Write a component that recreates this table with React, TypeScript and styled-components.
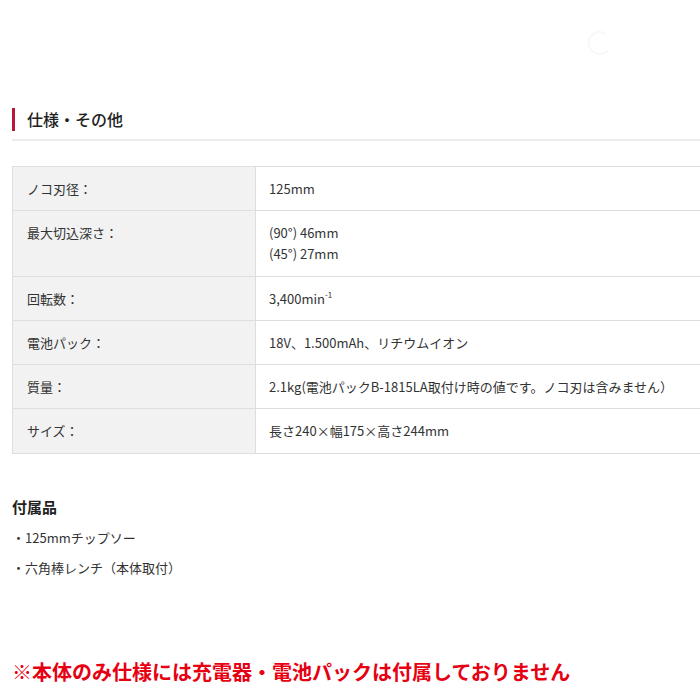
import React from "react";
import styled, { createGlobalStyle } from "styled-components";

const GlobalStyle = createGlobalStyle`
  html, body {
    margin: 0;
    padding: 0;
    background: #fff;
    overflow: hidden;
  }
  body {
    font-family: "Noto Sans CJK JP", "Noto Sans", sans-serif;
    color: #333;
  }
`;

const Page = styled.div`
  width: 700px;
  height: 700px;
  padding-left: 12px;
  box-sizing: border-box;
  overflow: hidden;
`;

const Top = styled.div`
  height: 103px;
  display: flex;
  justify-content: flex-end;
  align-items: flex-start;
  padding: 28px 86px 0 0;
  box-sizing: border-box;
`;

const Heading = styled.h2`
  margin: 0;
  display: flex;
  align-items: center;
  gap: 12px;
  font-size: 16px;
  font-weight: 500;
  line-height: 32px;
  color: #222;
  padding-bottom: 4px;
  border-bottom: 2px solid #ececec;
`;

const Bar = styled.span`
  width: 3px;
  height: 23px;
  background: #b5173d;
`;

const Table = styled.table`
  margin-top: 25px;
  width: 720px;
  border-collapse: collapse;
  font-size: 13px;
  border-top: 1px solid #dedede;
  border-left: 1px solid #dedede;
`;

const Row = styled.tr`
  border-bottom: 1px solid #dedede;
`;

const Label = styled.th`
  width: 243px;
  background: #f2f2f2;
  border-right: 1px solid #dedede;
  text-align: left;
  vertical-align: top;
  font-weight: 400;
  padding: 11px 14px 11.3px;
  line-height: 21px;
  box-sizing: border-box;
`;

const Value = styled.td`
  vertical-align: top;
  padding: 11px 13px 11.3px;
  line-height: 21px;
  background: #fff;
`;

const Sup = styled.sup`
  font-size: 8px;
  line-height: 0;
  vertical-align: 6px;
`;

const SubTitle = styled.h3`
  margin: 42px 0 0;
  font-size: 15px;
  font-weight: 700;
  line-height: 22px;
  color: #222;
`;

const List = styled.ul`
  list-style: none;
  margin: 5px 0 0;
  padding: 0;
  font-size: 13px;
`;

const Item = styled.li`
  line-height: 30px;
`;

const Note = styled.p`
  margin: 75px 0 0;
  font-size: 20px;
  font-weight: 700;
  line-height: 28px;
  color: #e60012;
  white-space: nowrap;
`;

const specs: { label: string; value: React.ReactNode }[] = [
  { label: "ノコ刃径：", value: "125mm" },
  {
    label: "最大切込深さ：",
    value: (
      <>
        (90°) 46mm
        <br />
        (45°) 27mm
      </>
    ),
  },
  {
    label: "回転数：",
    value: (
      <>
        3,400min<Sup>-1</Sup>
      </>
    ),
  },
  { label: "電池パック：", value: "18V、1.500mAh、リチウムイオン" },
  {
    label: "質量：",
    value: "2.1kg(電池パックB-1815LA取付け時の値です。ノコ刃は含みません）",
  },
  { label: "サイズ：", value: "長さ240×幅175×高さ244mm" },
];

export default function App() {
  return (
    <>
      <GlobalStyle />
      <Page>
        <Top>
          <svg width="30" height="30" viewBox="0 0 30 30">
            <path
              d="M22 6 A11 11 0 1 0 24 22"
              fill="none"
              stroke="#f8f8f8"
              strokeWidth="2"
            />
          </svg>
        </Top>
        <Heading>
          <Bar />
          仕様・その他
        </Heading>
        <Table>
          <tbody>
            {specs.map((s, i) => (
              <Row key={i}>
                <Label>{s.label}</Label>
                <Value>{s.value}</Value>
              </Row>
            ))}
          </tbody>
        </Table>
        <SubTitle>付属品</SubTitle>
        <List>
          <Item>・125mmチップソー</Item>
          <Item>・六角棒レンチ（本体取付）</Item>
        </List>
        <Note>※本体のみ仕様には充電器・電池パックは付属しておりません</Note>
      </Page>
    </>
  );
}
